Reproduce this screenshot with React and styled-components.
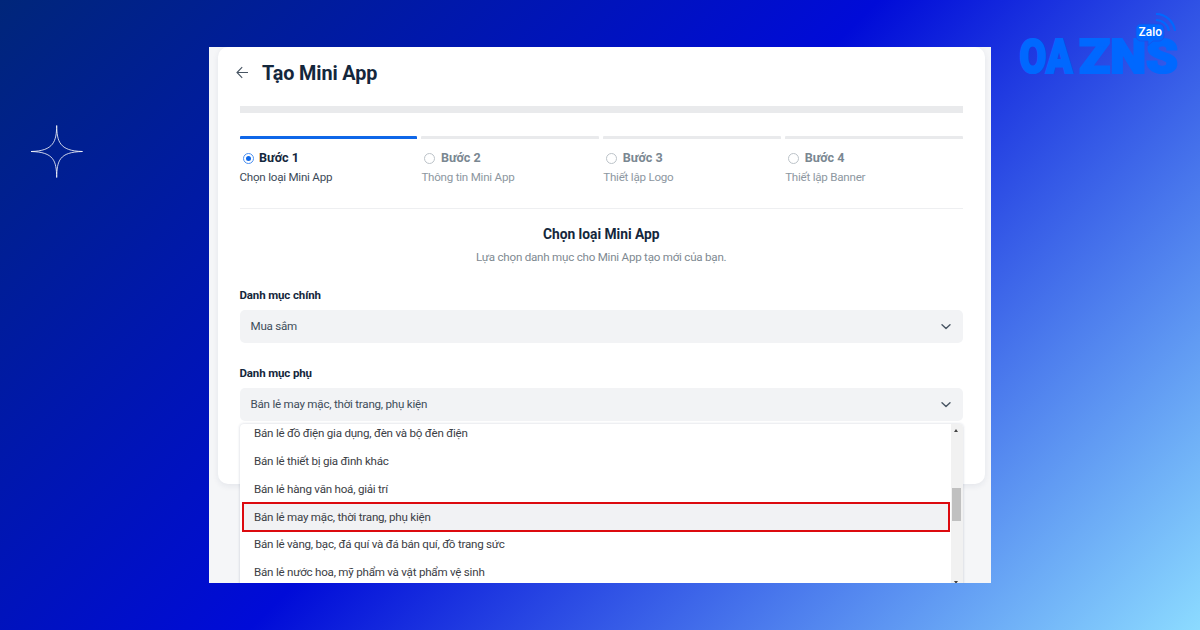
import React from "react";
import styled, { createGlobalStyle, css } from "styled-components";

const GlobalStyle = createGlobalStyle`
  * { box-sizing: border-box; }
  body { margin: 0; font-family: Roboto, "Noto Sans", sans-serif; }
`;

const bodyText = css`
  font-size: 11.6px;
  letter-spacing: -0.23px;
`;

const Banner = styled.main`
  position: relative;
  width: 1200px;
  height: 630px;
  padding: 47px 209px;
  overflow: hidden;
  background: linear-gradient(135deg, #00267a 0%, #000bd8 48%, #8cdbff 100%);
`;

const Sparkle = styled.svg`
  position: absolute;
  left: 30px;
  top: 124px;
  width: 54px;
  height: 55px;
`;

const Logo = styled.svg`
  position: absolute;
  left: 1010px;
  top: 5px;
  width: 180px;
  height: 80px;
`;

const Screen = styled.section`
  position: relative;
  width: 782px;
  height: 536px;
  padding: 0 6px 0 9px;
  overflow: hidden;
  background: #f5f6f8;
`;

const Card = styled.div`
  height: 437px;
  padding: 13px 22px 0 21.5px;
  border-radius: 10px;
  background: #fff;
  box-shadow: 0 2px 6px rgba(20, 40, 80, 0.08);
`;

const Header = styled.header`
  display: flex;
  align-items: center;
  gap: 13px;
  height: 25px;
  margin-left: -3.5px;
`;

const Title = styled.h1`
  margin: 0;
  padding-top: 2px;
  font-size: 19.8px;
  letter-spacing: -0.1px;
  line-height: 25px;
  font-weight: 700;
  color: #14273c;
`;

const Track = styled.div`
  height: 7px;
  margin-top: 21px;
  background: #e9eaec;
`;

const Steps = styled.div`
  display: grid;
  grid-template-columns: repeat(4, 1fr);
  gap: 4px;
  height: 73px;
  margin-top: 23px;
  border-bottom: 1px solid #eeeff1;
`;

const Step = styled.div`
  border-top: 3px solid ${(p) => (p.$active ? "#0f67e8" : "#e9eaec")};
  border-radius: 1px;
  color: ${(p) => (p.$active ? "#3c4a59" : "#8d979f")};
`;

const StepHead = styled.div`
  display: flex;
  align-items: center;
  gap: 5.5px;
  height: 16px;
  margin-top: 11px;
  padding-left: 3px;
  font-size: 12.6px;
  line-height: 14px;
  font-weight: 700;
  color: ${(p) => (p.$active ? "#14273c" : "#7a8791")};
`;

const StepName = styled.span`
  padding-bottom: 1px;
`;

const Radio = styled.span`
  display: grid;
  place-items: center;
  width: 11px;
  height: 11px;
  border: 1px solid ${(p) => (p.$active ? "#4b90f2" : "#bcc3c9")};
  border-radius: 50%;
  ${(p) =>
    p.$active &&
    css`
      &::after {
        content: "";
        width: 5px;
        height: 5px;
        border-radius: 50%;
        background: #0f67e8;
      }
    `}
`;

const StepNote = styled.div`
  margin-top: 3px;
  ${bodyText}
  line-height: 16px;
`;

const Intro = styled.div`
  padding-top: 16px;
  text-align: center;
`;

const IntroTitle = styled.h2`
  margin: 0;
  font-size: 13.8px;
  line-height: 18px;
  font-weight: 700;
  color: #14273c;
`;

const IntroText = styled.p`
  margin: 5px 0 0;
  ${bodyText}
  line-height: 18px;
  color: #7e8991;
`;

const Field = styled.div`
  margin-top: ${(p) => p.$gap}px;
`;

const Label = styled.div`
  height: 16px;
  font-size: 11.5px;
  letter-spacing: -0.13px;
  line-height: 16px;
  font-weight: 700;
  color: #14273c;
`;

const Select = styled.div`
  display: flex;
  align-items: center;
  justify-content: space-between;
  height: 33px;
  margin-top: 7px;
  padding: 0 11px;
  border-radius: 5px;
  background: #f2f3f5;
  ${bodyText}
  color: #404d5a;
`;

const SelectValue = styled.span`
  padding-bottom: 2px;
`;

const Menu = styled.div`
  position: absolute;
  left: 31px;
  top: 377px;
  display: flex;
  width: 723px;
  height: 170px;
  border-radius: 4px;
  overflow: hidden;
  background: #fff;
  box-shadow: 0 0 3px rgba(20, 40, 80, 0.2);
`;

const Options = styled.div`
  flex: 1;
`;

const Option = styled.div`
  height: 27.75px;
  padding-left: 14px;
  ${bodyText}
  line-height: 27.75px;
  color: #3b4045;
  ${(p) =>
    p.$first &&
    css`
      margin-top: -4px;
    `}
  ${(p) =>
    p.$selected &&
    css`
      height: 30px;
      margin: -1px 1px -1.25px 2px;
      padding-left: 10px;
      border: 2px solid #dc0a0f;
      line-height: 26px;
      background: #f1f2f4;
    `}
`;

const Scrollbar = styled.div`
  display: flex;
  flex-direction: column;
  align-items: center;
  justify-content: space-between;
  width: 12.5px;
  height: 160px;
  padding: 5px 1px 0 0;
  background: #f1f1f1;
`;

const Thumb = styled.div`
  width: 9px;
  height: 33px;
  margin-top: -4px;
  background: #c0c0c0;
`;

const Arrow = styled.div`
  border: solid transparent;
  border-width: 0 2.5px;
  ${(p) => (p.$up ? "border-bottom: 3px solid #454545;" : "border-top: 3px solid #454545;")}
`;

const Chevron = () => (
  <svg width="12" height="8" viewBox="0 0 12 8" fill="none">
    <path d="M2 1.8 6 5.6 10 1.8" stroke="#485563" strokeWidth="1.4" strokeLinecap="round" strokeLinejoin="round" />
  </svg>
);

const steps = [
  ["Bước 1", "Chọn loại Mini App"],
  ["Bước 2", "Thông tin Mini App"],
  ["Bước 3", "Thiết lập Logo"],
  ["Bước 4", "Thiết lập Banner"],
];

const SELECTED = "Bán lẻ may mặc, thời trang, phụ kiện";

const options = [
  "Bán lẻ đồ điện gia dụng, đèn và bộ đèn điện",
  "Bán lẻ thiết bị gia đình khác",
  "Bán lẻ hàng văn hoá, giải trí",
  SELECTED,
  "Bán lẻ vàng, bạc, đá quí và đá bán quí, đồ trang sức",
  "Bán lẻ nước hoa, mỹ phẩm và vật phẩm vệ sinh",
];

export default function App() {
  return (
    <Banner>
      <GlobalStyle />
      <Sparkle viewBox="0 0 54 55" fill="none">
        <path
          d="M26.7 1.5C27 17 29 27 52.5 27.5C29 28 27 37 26.7 53.5C26.4 37 24 28 1 27.5C24 27 26.4 17 26.7 1.5Z"
          stroke="#fff"
          strokeWidth="0.8"
        />
      </Sparkle>
      <Logo viewBox="1010 5 180 80">
        <g fill="#0068ff" stroke="#0068ff" strokeWidth="2.2" fontFamily="Roboto, sans-serif" fontWeight="900" fontSize="49">
          <text x="1019.5" y="73" textLength="53" lengthAdjust="spacingAndGlyphs">OA</text>
          <text x="1079" y="73" textLength="99" lengthAdjust="spacingAndGlyphs">ZNS</text>
        </g>
        <path
          d="M1141 24h18a5 5 0 0 1 5 5v7a5 5 0 0 1-5 5h-6l-5 4.5v-4.5h-7a5 5 0 0 1-5-5v-7a5 5 0 0 1 5-5Z"
          fill="#0068ff"
          stroke="#1a50e8"
          strokeWidth="0.8"
        />
        <path d="M1156 14C1166 14 1174 22 1175 31M1156 20C1163 20 1168 25 1169 31" fill="none" stroke="#0068ff" strokeWidth="2.2" />
        <text x="1138.5" y="36" textLength="23.5" lengthAdjust="spacingAndGlyphs" fill="#fff" fontFamily="Inter, sans-serif" fontWeight="600" fontSize="11.5">Zalo</text>
      </Logo>
      <Screen>
        <Card>
          <Header>
            <svg width="13" height="13" viewBox="0 0 13 13" fill="none">
              <path d="M12 6.5H1M6.2 1.2 1 6.5 6.2 11.8" stroke="#485563" strokeWidth="1.1" />
            </svg>
            <Title>Tạo Mini App</Title>
          </Header>
          <Track />
          <Steps>
            {steps.map(([name, note], i) => (
              <Step key={name} $active={i === 0}>
                <StepHead $active={i === 0}>
                  <Radio $active={i === 0} />
                  <StepName>{name}</StepName>
                </StepHead>
                <StepNote>{note}</StepNote>
              </Step>
            ))}
          </Steps>
          <Intro>
            <IntroTitle>Chọn loại Mini App</IntroTitle>
            <IntroText>Lựa chọn danh mục cho Mini App tạo mới của bạn.</IntroText>
          </Intro>
          <Field $gap={21}>
            <Label>Danh mục chính</Label>
            <Select>
              <SelectValue>Mua sắm</SelectValue>
              <Chevron />
            </Select>
          </Field>
          <Field $gap={22}>
            <Label>Danh mục phụ</Label>
            <Select>
              <SelectValue>{SELECTED}</SelectValue>
              <Chevron />
            </Select>
          </Field>
        </Card>
        <Menu>
          <Options>
            {options.map((text, i) => (
              <Option key={text} $first={i === 0} $selected={text === SELECTED}>
                {text}
              </Option>
            ))}
          </Options>
          <Scrollbar>
            <Arrow $up />
            <Thumb />
            <Arrow />
          </Scrollbar>
        </Menu>
      </Screen>
    </Banner>
  );
}
